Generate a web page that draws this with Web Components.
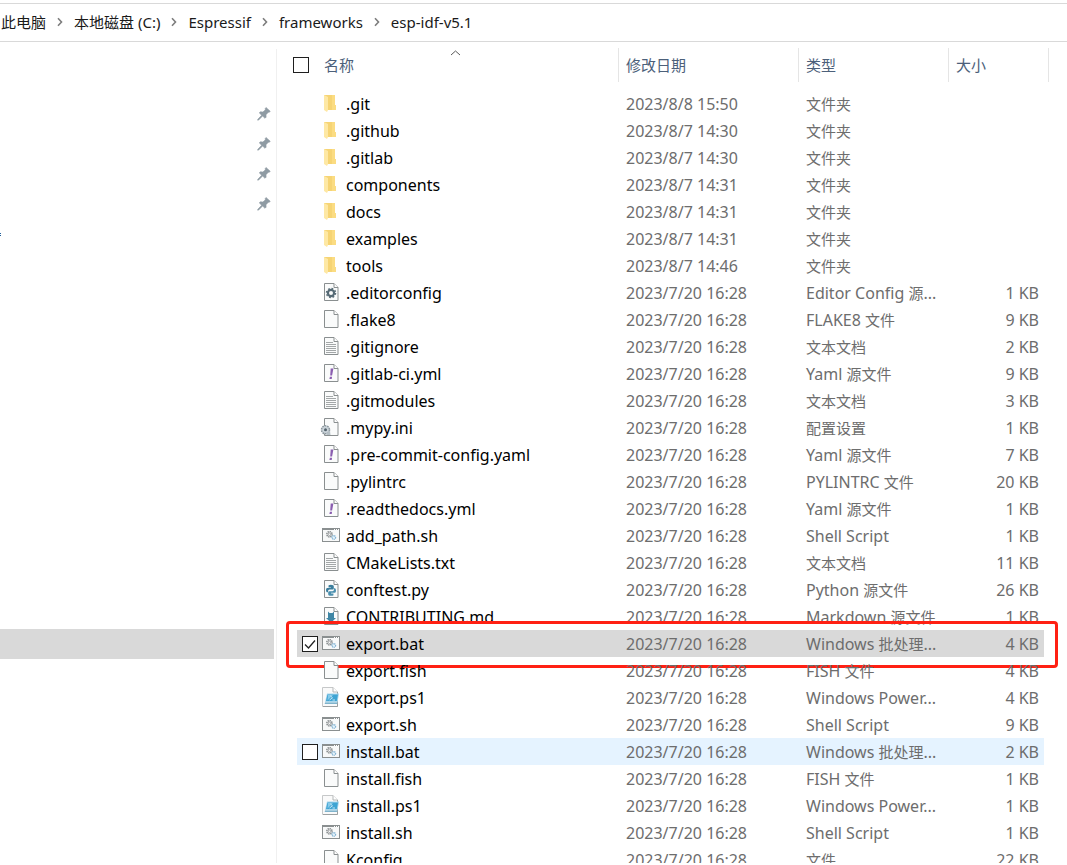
<!DOCTYPE html>
<html lang="zh-CN">
<head>
<meta charset="utf-8">
<title>esp-idf-v5.1</title>
<style>
  html, body { margin: 0; height: 100%; background: #fff; }
  body { font-family: "Noto Sans", "Noto Sans CJK SC", sans-serif; color: #000; }
</style>
</head>
<body>
<file-explorer>
  <address-bar slot="address" path="此电脑|本地磁盘 (C:)|Espressif|frameworks|esp-idf-v5.1"></address-bar>
  <nav-pane slot="nav"></nav-pane>
  <file-list slot="files"></file-list>
</file-explorer>

<script>
// Chinese runs are set one pixel smaller than Latin ones.
const runs = text => text.replace(/[\u4e00-\u9fff]+/g, '<span class="zh">$&</span>');

class FileExplorer extends HTMLElement {
  constructor() {
    super();
    this.attachShadow({ mode: 'open' }).innerHTML = `
      <style>
        :host { display: flex; flex-direction: column; height: 100vh; box-sizing: border-box;
                padding: 3px 0 2px; overflow: hidden; }
        main { display: flex; flex: 1; min-height: 0; }
        ::slotted([slot="files"]) { flex: 1; min-width: 0; }
      </style>
      <slot name="address"></slot>
      <main><slot name="nav"></slot><slot name="files"></slot></main>`;
  }
}

class AddressBar extends HTMLElement {
  constructor() {
    super();
    const chevron = `<svg width="8" height="10" viewBox="0 0 8 10" aria-hidden="true"><path d="M2 1.2 5.500 5 2 8.800" fill="none" stroke="#7d7d7d" stroke-width="1.6"/></svg>`;
    const items = this.getAttribute('path').split('|')
      .map(p => `<li><a href="#">${p}</a></li>`).join(`<li aria-hidden="true">${chevron}</li>`);
    this.attachShadow({ mode: 'open' }).innerHTML = `
      <style>
        :host { display: block; border: solid #d9d9d9; border-width: 1px 0; }
        ol { display: flex; align-items: center; gap: 10px; height: 35px; margin: 0; padding: 0 0 2px 1px;
             list-style: none; font-size: 15px; line-height: 20px; white-space: nowrap; }
        li { display: flex; }
        a { color: #1a1a1a; text-decoration: none; }
      </style>
      <nav aria-label="路径"><ol>${items}</ol></nav>`;
  }
}

class NavPane extends HTMLElement {
  constructor() {
    super();
    const pin = `<svg width="14" height="14" viewBox="0 0 14 14" aria-hidden="true"><path d="M9 .5 13.2 4.2 12.3 5.3 11.3 5.2 9 7.8 9.1 10.2 8 11.3 5.6 9 1.6 13.1.7 13.2.8 12.3 4.7 8.2 2.3 5.9 3.3 4.8 5.9 5 8.4 2.8 8.2 1.5Z" fill="#8f9ba3" stroke="#8f9ba3" stroke-width=".6"/></svg>`;
    this.attachShadow({ mode: 'open' }).innerHTML = `
      <style>
        :host { display: block; width: 276px; flex: none; margin-top: 7px; border-right: 1px solid #f0f0f0; }
        ul { margin: 0; padding: 50px 2px 0 0; list-style: none; }
        li { display: flex; align-items: center; height: 30px; }
        .pinned { justify-content: flex-end; padding-right: 3px; }
        .current { margin-top: 380px; background: #d9d9d9; }
      </style>
      <ul>
        ${`<li class="pinned">${pin}</li>`.repeat(4)}
        <li><svg width="1" height="4" aria-hidden="true"><path d="M0 1h1v1H0zM0 3h1v1H0z" fill="#1f5f9a"/></svg></li>
        <li class="current" aria-current="true"></li>
      </ul>`;
  }
}

const page = (inner = '') => `
  <path d="M3.5 1.5h9.5l4 4v13H3.5z" fill="#fafbfb" stroke="#8a8f90"/>
  <path d="M13 1.5v4h4" fill="#fff" stroke="#8a8f90"/>${inner}`;
const shell = `
  <rect x="1.5" y="3.5" width="17" height="13" fill="#f8f9f9" stroke="#8a8f90"/>
  <path d="M1 3h18v2H1z" fill="#8a8f90"/>
  <path d="M13 4h1v1h-1zM15 4h1v1h-1zM17 4h1v1h-1z" fill="#fff"/>
  <circle cx="8.5" cy="9.3" r="2.6" fill="none" stroke="#858a8c" stroke-width="1.6" stroke-dasharray="1.3 .7"/>
  <circle cx="8.5" cy="9.3" r="1.2" fill="none" stroke="#858a8c" stroke-width=".7"/>
  <circle cx="12.8" cy="12.5" r="1.8" fill="#e8f4fb" stroke="#84b4d4" stroke-width="1.3" stroke-dasharray="1.1 .5"/>`;
const ICONS = {
  folder: `
    <path d="M3 2h11v10h1v5H3z" fill="#f6d474"/>
    <path d="M11 2h3v10h1v5h-4z" fill="#fbdc82"/>
    <path d="M3 2l4 2v13l-1 2-3-2z" fill="#fee8a4"/>`,
  blank: page(),
  text: page(`<path d="M5 6.5h7M5 8.5h10M5 10.5h10M5 12.5h10M5 14.5h10M5 16.5h10" stroke="#a3a7a8"/>`),
  gear: page(`<circle cx="10" cy="11" r="3.1" fill="none" stroke="#566a75" stroke-width="2.2"/>
    <circle cx="10" cy="11" r="4.6" fill="none" stroke="#566a75" stroke-width="1.3" stroke-dasharray="1.8 1.81"/>`),
  yaml: page(`<path d="M9.7 5.5h2.700l-1.3 7H9.2zM8.900 13.800h2.200l-.4 2.200H8.400z" fill="#8a5db0"/>`),
  ini: page(`<circle cx="4.5" cy="12.8" r="4" fill="#cbd4da" stroke="#8c979e" stroke-width="1.5" stroke-dasharray="1.7 .8"/>
    <circle cx="4.5" cy="12.8" r="1.5" fill="#52616b"/><path d="M5 16l4-2.5.5 4.5H6z" fill="#b5bfc5"/>`),
  shell,
  python: page(`<path d="M7.6 6.3q2.4-1 4.5 0 .7.4.7 1.2v2q0 1-1 1H8.6Q7 10.600 7 12.300v.9H5.900Q5 12.700 5 11t.9-2h4V8.500H7.500z" fill="#3a7d9c"/>
    <path d="M12.400 16.400q-2.400.9-4.500 0-.700-.4-.700-1.200v-2q0-1 1-1h3.200q1.600-.1 1.600-1.800V9.300h1.100q.9.600.9 2.300t-.9 2.200h-4v.6h2.400z" fill="#4b8fae"/>`),
  markdown: page(`<path d="M7 5.500l1.500 1.500h3L13 5.500v6.500h2L10 16.800 5 12h2z" fill="#3f86a5"/>`),
  powershell: `
    <path d="M1.500.5h10.500l4.500 4.500v14.500h-15z" fill="#fafafa" stroke="#c6c8c9"/>
    <path d="M12 .5V5h4.500" fill="#fff" stroke="#b5b8b9"/>
    <path d="M16.500 5v14.500H2" fill="none" stroke="#9ca0a1"/>
    <path d="M6 6.500H18l-1.500 9H4z" fill="#a9d6ec"/>
    <path d="M6.500 7.500h10.500l-1.200 6.500H5z" fill="#3fa4d3"/>
    <path d="M7 8h5l-5.500 5.500z" fill="#86caea"/>
    <path d="M9.500 9l2 1.800-3 2.200M11.500 13H14" fill="none" stroke="#e6f5fc" stroke-width=".8"/>
    <path d="M4 15.500h12.500l-.3 1.500H3.700z" fill="#7fb3cc"/>`
};

class FileIcon extends HTMLElement {
  constructor() {
    super();
    this.attachShadow({ mode: 'open' });
  }
  connectedCallback() {
    this.shadowRoot.innerHTML = `
      <style>:host { display: block; width: 20px; height: 21px; flex: none; } svg { display: block; overflow: visible; }</style>
      <svg width="20" height="21" viewBox="0 0 20 21" aria-hidden="true">${ICONS[this.getAttribute('kind')]}</svg>`;
  }
}

const T = '2023/7/20 16:28';
const FILES = [
  ['folder', '.git', '2023/8/8 15:50', '文件夹', ''],
  ['folder', '.github', '2023/8/7 14:30', '文件夹', ''],
  ['folder', '.gitlab', '2023/8/7 14:30', '文件夹', ''],
  ['folder', 'components', '2023/8/7 14:31', '文件夹', ''],
  ['folder', 'docs', '2023/8/7 14:31', '文件夹', ''],
  ['folder', 'examples', '2023/8/7 14:31', '文件夹', ''],
  ['folder', 'tools', '2023/8/7 14:46', '文件夹', ''],
  ['gear', '.editorconfig', T, 'Editor Config 源...', '1 KB'],
  ['blank', '.flake8', T, 'FLAKE8 文件', '9 KB'],
  ['text', '.gitignore', T, '文本文档', '2 KB'],
  ['yaml', '.gitlab-ci.yml', T, 'Yaml 源文件', '9 KB'],
  ['text', '.gitmodules', T, '文本文档', '3 KB'],
  ['ini', '.mypy.ini', T, '配置设置', '1 KB'],
  ['yaml', '.pre-commit-config.yaml', T, 'Yaml 源文件', '7 KB'],
  ['blank', '.pylintrc', T, 'PYLINTRC 文件', '20 KB'],
  ['yaml', '.readthedocs.yml', T, 'Yaml 源文件', '1 KB'],
  ['shell', 'add_path.sh', T, 'Shell Script', '1 KB'],
  ['text', 'CMakeLists.txt', T, '文本文档', '11 KB'],
  ['python', 'conftest.py', T, 'Python 源文件', '26 KB'],
  ['markdown', 'CONTRIBUTING.md', T, 'Markdown 源文件', '1 KB'],
  ['shell', 'export.bat', T, 'Windows 批处理...', '4 KB', 'selected'],
  ['blank', 'export.fish', T, 'FISH 文件', '4 KB'],
  ['powershell', 'export.ps1', T, 'Windows Power...', '4 KB'],
  ['shell', 'export.sh', T, 'Shell Script', '9 KB'],
  ['shell', 'install.bat', T, 'Windows 批处理...', '2 KB', 'hot'],
  ['blank', 'install.fish', T, 'FISH 文件', '1 KB'],
  ['powershell', 'install.ps1', T, 'Windows Power...', '1 KB'],
  ['shell', 'install.sh', T, 'Shell Script', '1 KB'],
  ['blank', 'Kconfig', T, '文件', '22 KB']
];

class FileList extends HTMLElement {
  constructor() {
    super();
    const row = ([kind, name, date, type, size, state = '']) => `
      <tr class="${state}">
        <td class="name"><div class="cell">
          <input type="checkbox" aria-label="${name}"${state === 'selected' ? ' checked' : ''}>
          <file-icon kind="${kind}"></file-icon><span>${name}</span></div>
          ${state === 'selected' ? '<div class="frame"></div>' : ''}</td>
        <td>${date}</td>
        <td>${runs(type)}</td>
        <td class="size">${size}</td>
      </tr>`;
    this.attachShadow({ mode: 'open' }).innerHTML = `
      <style>
        :host { display: block; padding: 6px 18px 0 16px; overflow: hidden; }
        table { width: 100%; table-layout: fixed; border-spacing: 0; font-size: 16px; line-height: 25px; white-space: nowrap; }
        .zh { font-size: 15px; }
        col.date { width: 180px; } col.type { width: 150px; } col.size { width: 100px; }
        th { position: relative; box-sizing: border-box; height: 34px; padding: 0 0 0 7px; text-align: left;
             font-weight: 400; border-right: 1px solid #e5e5e5; }
        th:first-child { padding-left: 0; }
        th .cell { gap: 15px; height: 34px; }
        th button { padding: 0; border: 0; background: none; font: inherit; font-size: 15px; line-height: 27px; color: #4c607a; }
        th svg { position: absolute; top: 2px; left: calc(50% - 6px); }
        tbody::before { content: ""; display: block; height: 8px; }
        tr { position: relative; }
        td { box-sizing: border-box; height: 27px; padding: 2px 0 0 7px; color: #6d6d6d; }
        .cell { display: flex; align-items: center; }
        td.name { padding: 0 0 0 5px; border-left: 4px solid transparent; background-clip: padding-box; color: #000; }
        td .cell { gap: 3px; height: 27px; }
        td .cell span { padding: 2px 0 0 2px; }
        td.size { padding: 2px 5px 0 0; text-align: right; border-right: 5px solid transparent; background-clip: padding-box; }
        .selected td { background-color: #d9d9d9; }
        .hot td { background-color: #e5f3ff; }
        input { appearance: none; flex: none; width: 16px; height: 16px; margin: 0; border: 1px solid #1f1f1f; background: #fff; }
        td input { opacity: 0; }
        .selected input, .hot input, tr:hover input { opacity: 1; }
        input:checked { background: #fff url("data:image/svg+xml,%3Csvg xmlns='http://www.w3.org/2000/svg' viewBox='0 0 14 14'%3E%3Cpath d='M2 7.500 5.500 11 12 3.500' fill='none' stroke='%23222' stroke-width='1.300'/%3E%3C/svg%3E"); }
        .frame { position: absolute; inset: -9px -9px -11px -7px; border: 3px solid #ff2013; border-radius: 4px; pointer-events: none; }
      </style>
      <table>
        <colgroup><col><col class="date"><col class="type"><col class="size"></colgroup>
        <thead><tr>
          <th scope="col"><div class="cell"><input type="checkbox" aria-label="全选"><button type="button">名称</button></div>
            <svg width="11" height="6" viewBox="0 0 11 6" aria-hidden="true"><path d="M1 5 5.500 1 10 5" fill="none" stroke="#5a5a5a"/></svg></th>
          <th scope="col"><button type="button">修改日期</button></th>
          <th scope="col"><button type="button">类型</button></th>
          <th scope="col"><button type="button">大小</button></th>
        </tr></thead>
        <tbody>${FILES.map(row).join('')}</tbody>
      </table>`;
  }
}

customElements.define('file-icon', FileIcon);
customElements.define('address-bar', AddressBar);
customElements.define('nav-pane', NavPane);
customElements.define('file-list', FileList);
customElements.define('file-explorer', FileExplorer);
</script>
</body>
</html>
